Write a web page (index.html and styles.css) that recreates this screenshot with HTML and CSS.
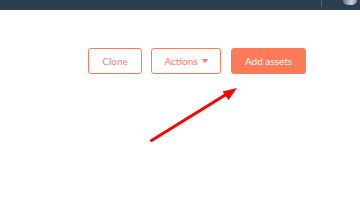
FILE: index.html
```html
<!DOCTYPE html>
<html>
<head>
<meta charset="utf-8">
<link rel="stylesheet" href="styles.css">
</head>
<body>
<header class="topbar">
  <span class="sep"></span>
  <span class="avatar"></span>
</header>
<main class="content">
  <div class="toolbar">
    <button class="btn btn-outline btn-clone">Clone</button>
    <button class="btn btn-outline btn-actions">Actions <span class="caret"></span></button>
    <button class="btn btn-primary">Add assets</button>
  </div>
  <svg class="arrow" width="360" height="202" viewBox="0 0 360 202">
    <line x1="151.5" y1="140.5" x2="226" y2="94.5" stroke="#ff0000" stroke-width="3" stroke-linecap="round"/>
    <polygon points="237,88 222.5,91.5 228.5,100" fill="#ff0000"/>
  </svg>
</main>
</body>
</html>
```
FILE: styles.css
```css
* { box-sizing: border-box; }
html, body { margin: 0; padding: 0; background: #fff; }
body { width: 360px; height: 202px; overflow: hidden; font-family: Lato, "Open Sans", sans-serif; }
.topbar {
  height: 10px;
  background: #2d3e50;
  display: flex;
  align-items: flex-start;
  justify-content: flex-end;
  padding-right: 3px;
  gap: 21px;
}
.sep { width: 1px; height: 7px; background: #56667a; }
.avatar {
  width: 14px; height: 5px;
  border-radius: 0 0 7px 7px;
  background: linear-gradient(90deg, #6a7686, #c9ced5 60%, #8a949f);
}
.content { position: relative; height: 192px; }
.toolbar {
  display: flex;
  justify-content: flex-end;
  gap: 9px;
  padding: 38px 54px 0 0;
}
.btn {
  height: 26px;
  border-radius: 3px;
  font-family: Lato, "Open Sans", sans-serif;
  font-size: 10px;
  padding: 0;
  display: flex;
  align-items: center;
  justify-content: center;
  cursor: pointer;
}
.btn-outline {
  background: #fff;
  border: 1px solid #ff7a59;
  color: #ff7a59;
}
.btn-clone { width: 54px; color: #f57e86; }
.btn-actions { width: 70px; gap: 4px; margin-right: 1px; }
.btn-primary {
  width: 75px;
  background: #ff7a59;
  border: 1px solid #ff7a59;
  color: #fff;
}
.caret {
  width: 0; height: 0;
  border-left: 3.5px solid transparent;
  border-right: 3.5px solid transparent;
  border-top: 4px solid #ff7a59;
}
.arrow { position: absolute; left: 0; top: -10px; pointer-events: none; }
```
